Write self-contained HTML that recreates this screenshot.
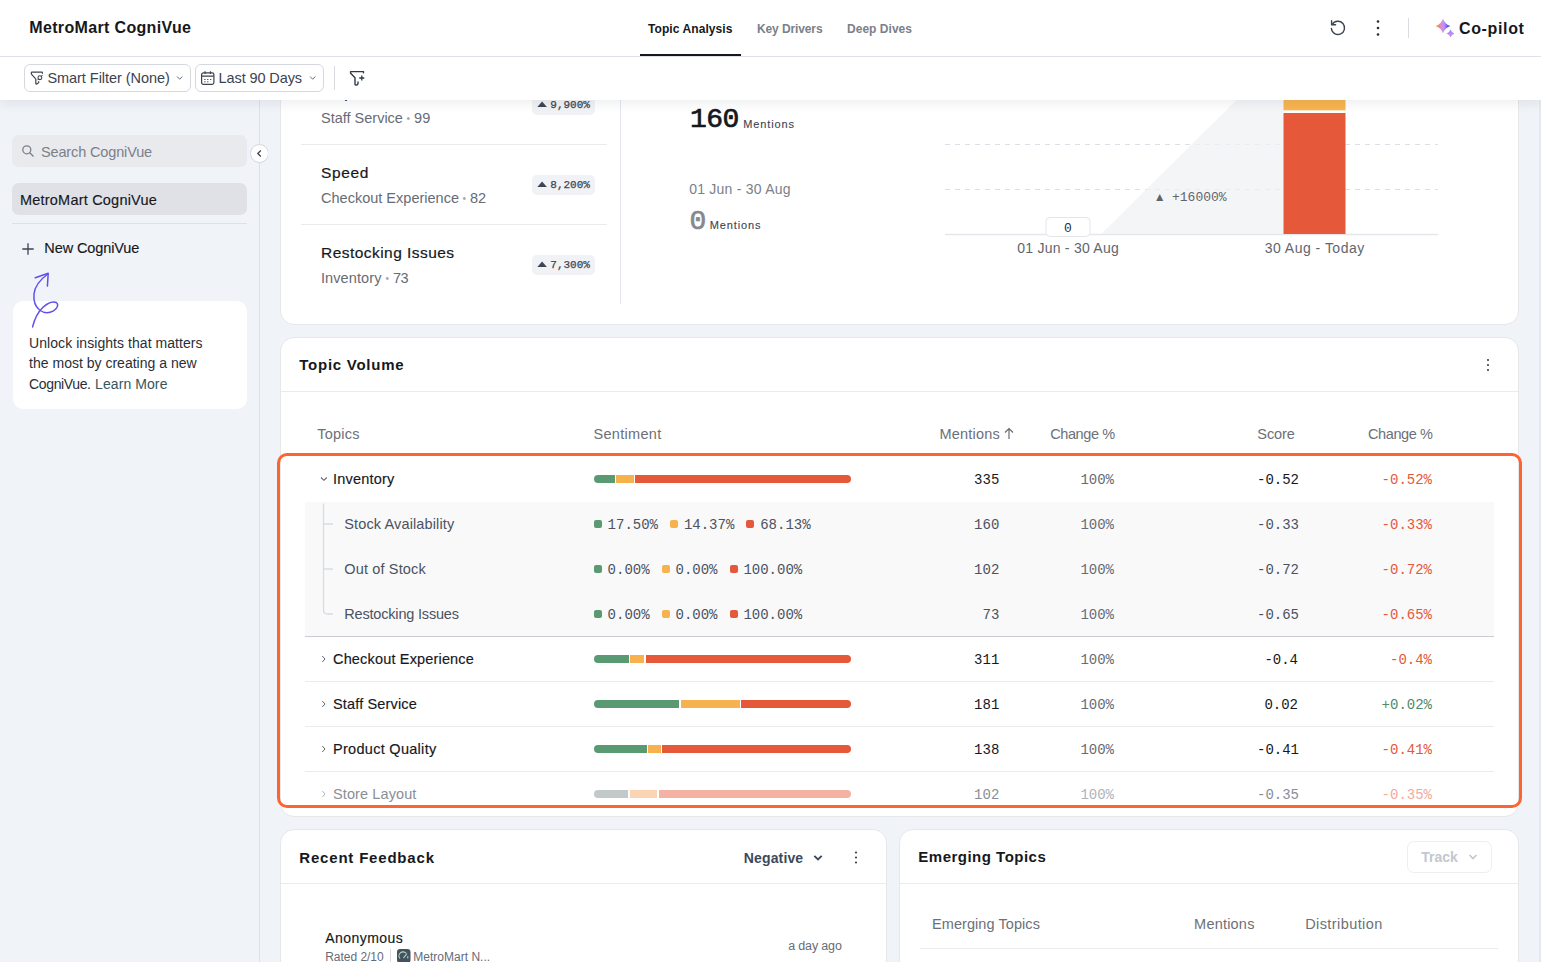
<!DOCTYPE html>
<html lang="en">
<head>
<meta charset="utf-8">
<title>MetroMart CogniVue</title>
<style>
*{box-sizing:border-box;margin:0;padding:0}
html,body{width:1541px;height:962px;overflow:hidden}
body{font-family:"Liberation Sans",sans-serif;background:#f0f3f8;color:#16181d;position:relative}
.layer{position:absolute;left:0;top:0;width:1541px;height:962px;overflow:hidden}
.t{position:absolute;white-space:nowrap;line-height:1;font-family:"Liberation Sans",sans-serif}
.m{font-family:"Liberation Mono",monospace}
.a{position:absolute}
svg{position:absolute;overflow:visible}
.card{position:absolute;background:#fff;border:1px solid #e5e7eb;border-radius:14px}
.hl{position:absolute;height:1px;background:#eaebee}
.badge{position:absolute;left:532px;width:62.5px;height:20px;background:#f1f2f5;border-radius:5px}
.bar{position:absolute;left:594px;width:256.5px;height:8px;border-radius:4px;overflow:hidden}
.bar i{position:absolute;top:0;height:8px}
.g{background:#5a9a72}.o{background:#f7b24d}.r{background:#e5583a}
.sq{position:absolute;width:7.5px;height:7.5px;border-radius:2px}
.fbtn{position:absolute;top:64px;height:28px;border:1px solid #d5d8df;border-radius:6px;background:#fff}
</style>
</head>
<body>
<!-- ================= MAIN ================= -->
<div id="main" class="layer">
  <!-- card 1 -->
  <div class="card" style="left:280px;top:60px;width:1239px;height:265px"></div>
  <div class="hl" style="left:301px;top:144px;width:306px"></div>
  <div class="hl" style="left:301px;top:224px;width:306px"></div>
  <div class="a" style="left:620px;top:90px;width:1px;height:214px;background:#e3e6ed"></div>
  <div class="badge" style="top:95px"></div>
  <div class="badge" style="top:175px"></div>
  <div class="badge" style="top:255px"></div>
  <svg style="left:0;top:0" width="1541" height="330" viewBox="0 0 1541 330"><g fill="#3c4654"><polygon points="537.3,107.0 546.9,107.0 542.1,101.6"/><polygon points="537.3,187.0 546.9,187.0 542.1,181.6"/><polygon points="537.3,267.0 546.9,267.0 542.1,261.6"/></g></svg>
  <!-- chart -->
  <svg style="left:0;top:0" width="1541" height="330" viewBox="0 0 1541 330">
    <polygon points="1101,234.5 1283.5,54 1283.5,234.5" fill="#f4f5f7"/>
    <line x1="945" y1="144.5" x2="1438" y2="144.5" stroke="#dcdfe8" stroke-width="1" stroke-dasharray="5 5"/>
    <line x1="945" y1="189.5" x2="1438" y2="189.5" stroke="#dcdfe8" stroke-width="1" stroke-dasharray="5 5"/>
    <line x1="945" y1="234.5" x2="1438" y2="234.5" stroke="#e4e6eb" stroke-width="1.6"/>
    <polygon points="1101,234 1283.5,53.5 1283.5,234" fill="#f4f5f7" fill-opacity=".6"/>
    <rect x="1283.5" y="113" width="62" height="121" fill="#e5583a"/>
    <rect x="1283.5" y="60" width="62" height="50.3" fill="#f8b44e"/>
    <rect x="1046" y="217.5" width="44" height="19" rx="4" fill="#fff" stroke="#e3e5ea" stroke-width="1"/>
  </svg>
  <!-- topic volume card -->
  <div class="card" style="left:280px;top:337px;width:1239px;height:480px"></div>
  <div class="hl" style="left:281px;top:391px;width:1237px"></div>
  <svg style="left:1485px;top:357px" width="6" height="16" viewBox="0 0 6 16"><circle cx="3" cy="3" r="1.1" fill="#3c4350"/><circle cx="3" cy="8" r="1.1" fill="#3c4350"/><circle cx="3" cy="13" r="1.1" fill="#3c4350"/></svg>
  <!-- sort arrow -->
  <svg style="left:1003px;top:427px" width="12" height="13" viewBox="0 0 12 13"><path d="M6 12V1.5M2 5.5L6 1.5L10 5.5" fill="none" stroke="#666c77" stroke-width="1.2"/></svg>
  <!-- sub rows bg -->
  <div class="a" style="left:305px;top:501.5px;width:1189px;height:134.5px;background:#f9f9fa"></div>
  <div class="a" style="left:305px;top:636px;width:1189px;height:1px;background:#c9ccd3"></div>
  <div class="hl" style="left:305px;top:681px;width:1189px"></div>
  <div class="hl" style="left:305px;top:726px;width:1189px"></div>
  <div class="hl" style="left:305px;top:771px;width:1189px"></div>
  <!-- tree lines -->
  <svg style="left:0;top:0" width="1541" height="962" viewBox="0 0 1541 962">
    <path d="M323.5 503.5V610Q323.5 614 327.5 614H333M323.5 524H333M323.5 569H333" fill="none" stroke="#d8dbe4" stroke-width="1.3"/>
    <path d="M321 477.5L323.9 480.3L326.800 477.5" fill="none" stroke="#5f6570" stroke-width="1.1"/>
    <g fill="none" stroke="#5f6670" stroke-width="1">
      <path d="M322.3 656L325 659L322.3 662"/>
      <path d="M322.3 701L325 704L322.3 707"/>
      <path d="M322.3 746L325 749L322.3 752"/>
      <path d="M322.3 791L325 794L322.3 797" stroke="#b0b3ba"/>
    </g>
  </svg>
  <!-- bars -->
  <div class="bar" style="top:475px"><i class="g" style="left:0;width:21px"></i><i class="o" style="left:22.3px;width:17.5px"></i><i class="r" style="left:41px;width:216px"></i></div>
  <div class="bar" style="top:655px"><i class="g" style="left:0;width:34.8px"></i><i class="o" style="left:36.4px;width:13.7px"></i><i class="r" style="left:51.8px;width:205px"></i></div>
  <div class="bar" style="top:700px"><i class="g" style="left:0;width:85px"></i><i class="o" style="left:86.7px;width:59.3px"></i><i class="r" style="left:147.3px;width:110px"></i></div>
  <div class="bar" style="top:745px"><i class="g" style="left:0;width:52.6px"></i><i class="o" style="left:54.3px;width:12.4px"></i><i class="r" style="left:68.4px;width:189px"></i></div>
  <div class="bar" style="top:790px"><i style="left:0;width:34px;background:#c3c8c9"></i><i style="left:35.6px;width:27.4px;background:#fbd4b3"></i><i style="left:64.7px;width:192px;background:#f4b2a4"></i></div>
  <!-- legend squares -->
  <div class="sq g" style="left:594px;top:520.3px"></div><div class="sq o" style="left:670.3px;top:520.3px"></div><div class="sq r" style="left:746px;top:520.3px"></div>
  <div class="sq g" style="left:594px;top:565.3px"></div><div class="sq o" style="left:662px;top:565.3px"></div><div class="sq r" style="left:730px;top:565.3px"></div>
  <div class="sq g" style="left:594px;top:610.3px"></div><div class="sq o" style="left:662px;top:610.3px"></div><div class="sq r" style="left:730px;top:610.3px"></div>
  <!-- highlight box -->
  <div class="a" style="left:277px;top:453px;width:1245px;height:355px;border:3px solid #fd6432;border-radius:10px"></div>
  <!-- bottom cards -->
  <div class="card" style="left:280px;top:829px;width:607px;height:200px"></div>
  <div class="hl" style="left:281px;top:883px;width:605px"></div>
  <div class="card" style="left:899px;top:829px;width:620px;height:200px"></div>
  <div class="hl" style="left:900px;top:883px;width:618px"></div>
  <div class="hl" style="left:920px;top:948px;width:578px"></div>
  <svg style="left:812px;top:853px" width="12" height="10" viewBox="0 0 12 10"><path d="M2.300 2.800L6 6.500L9.700 2.800" fill="none" stroke="#3b4a5c" stroke-width="1.900"/></svg>
  <svg style="left:853px;top:850px" width="6" height="16" viewBox="0 0 6 16"><circle cx="3" cy="2.5" r="1.1" fill="#3c4350"/><circle cx="3" cy="7.5" r="1.1" fill="#3c4350"/><circle cx="3" cy="12.5" r="1.1" fill="#3c4350"/></svg>
  <div class="a" style="left:1407px;top:841px;width:85px;height:31.5px;border:1px solid #eceef2;border-radius:7px"></div>
  <svg style="left:1467px;top:852px" width="12" height="10" viewBox="0 0 12 10"><path d="M2.5 3L6 6.5L9.5 3" fill="none" stroke="#c3c7cf" stroke-width="1.6"/></svg>
  <div class="a" style="left:390px;top:949px;width:1px;height:13px;background:#d9dbe0"></div>
  <svg style="left:397px;top:949px" width="14" height="14" viewBox="0 0 14 14"><rect x="0" y="0" width="13.5" height="14" rx="3.2" fill="#44515e"/><path d="M3 9.500A4 4 0 0 1 9 4.200" fill="none" stroke="#b5dcc0" stroke-width="1.100"/><path d="M6.500 9L10 4.500" stroke="#b5dcc0" stroke-width="1.200"/><path d="M10.800 7V9.500" stroke="#b5dcc0" stroke-width="1"/></svg>
<div class="a" style="left:1539px;top:100px;width:2px;height:862px;background:#e6e8ed"></div>
<span id="t14" class="t" style="top:85px;font-size:15.5px;color:#16181d;left:321.00px;-webkit-text-stroke:.2px #16181d;">Helpfulness</span>
<span id="t15" class="t" style="top:111px;font-size:14.5px;color:#666c77;left:321.00px;">Staff Service</span>
<span id="t16" class="t" style="top:111px;font-size:14.5px;color:#666c77;left:414.00px;letter-spacing:0.180px;">99</span>
<span id="t17" class="t" style="top:165px;font-size:15.5px;color:#16181d;left:321.00px;letter-spacing:0.634px;-webkit-text-stroke:.2px #16181d;">Speed</span>
<span id="t18" class="t" style="top:191px;font-size:14.5px;color:#666c77;left:321.00px;letter-spacing:0.009px;">Checkout Experience</span>
<span id="t19" class="t" style="top:191px;font-size:14.5px;color:#666c77;left:470.00px;letter-spacing:-0.070px;">82</span>
<span id="t20" class="t" style="top:245px;font-size:15.5px;color:#16181d;left:321.00px;letter-spacing:0.454px;-webkit-text-stroke:.2px #16181d;">Restocking Issues</span>
<span id="t21" class="t" style="top:271px;font-size:14.5px;color:#666c77;left:321.00px;letter-spacing:0.094px;">Inventory</span>
<span id="t22" class="t" style="top:271px;font-size:14.5px;color:#666c77;left:393.00px;letter-spacing:-0.570px;">73</span>
<span id="t23" class="t" style="top:114px;font-size:10px;color:#a3a8b0;left:406.40px;">•</span>
<span id="t24" class="t" style="top:194px;font-size:10px;color:#a3a8b0;left:462.50px;">•</span>
<span id="t25" class="t" style="top:274px;font-size:10px;color:#a3a8b0;left:385.40px;">•</span>
<span id="t26" class="t m" style="top:100px;font-size:11px;color:#3c4654;left:550.30px;-webkit-text-stroke:.25px #3c4654;">9,900%</span>
<span id="t27" class="t m" style="top:180px;font-size:11px;color:#3c4654;left:550.30px;-webkit-text-stroke:.25px #3c4654;">8,200%</span>
<span id="t28" class="t m" style="top:260px;font-size:11px;color:#3c4654;left:550.30px;-webkit-text-stroke:.25px #3c4654;">7,300%</span>
<span id="t29" class="t m" style="top:106px;font-size:28px;color:#16181d;left:690.00px;letter-spacing:-0.607px;-webkit-text-stroke:.7px #16181d;">160</span>
<span id="t30" class="t" style="top:119px;font-size:11px;color:#3c4350;left:743.30px;letter-spacing:0.857px;-webkit-text-stroke:.1px #3c4350;">Mentions</span>
<span id="t31" class="t" style="top:182px;font-size:14px;color:#7b8089;left:689.20px;letter-spacing:0.235px;">01 Jun - 30 Aug</span>
<span id="t32" class="t m" style="top:208px;font-size:28px;color:#85888f;left:689.50px;letter-spacing:-0.613px;-webkit-text-stroke:.7px #85888f;">0</span>
<span id="t33" class="t" style="top:220px;font-size:11px;color:#3c4350;left:709.80px;letter-spacing:0.857px;-webkit-text-stroke:.1px #3c4350;">Mentions</span>
<span id="t34" class="t m" style="top:191px;font-size:13px;color:#60656c;left:1172.00px;">+16000%</span>
<span id="t35" class="t" style="top:191px;font-size:12px;color:#60656c;left:1153.80px;">▲</span>
<span id="t36" class="t m" style="top:222px;font-size:13px;color:#2a2e36;left:1064.00px;letter-spacing:-0.013px;">0</span>
<span id="t37" class="t" style="top:241px;font-size:14px;color:#5f6670;left:1017.20px;letter-spacing:0.248px;">01 Jun - 30 Aug</span>
<span id="t38" class="t" style="top:241px;font-size:14px;color:#5f6670;left:1264.70px;letter-spacing:0.489px;">30 Aug - Today</span>
<span id="t39" class="t" style="top:357px;font-size:15px;color:#16181d;font-weight:700;left:299.30px;letter-spacing:0.740px;">Topic Volume</span>
<span id="t40" class="t" style="top:427px;font-size:14.5px;color:#6c7078;left:317.30px;letter-spacing:0.232px;">Topics</span>
<span id="t41" class="t" style="top:427px;font-size:14.5px;color:#6c7078;left:593.50px;letter-spacing:0.300px;">Sentiment</span>
<span id="t42" class="t" style="top:427px;font-size:14.5px;color:#6c7078;left:939.50px;letter-spacing:0.207px;">Mentions</span>
<span id="t43" class="t" style="top:427px;font-size:14.5px;color:#6c7078;left:1050.20px;letter-spacing:-0.402px;">Change %</span>
<span id="t44" class="t" style="top:427px;font-size:14.5px;color:#6c7078;left:1257.30px;letter-spacing:-0.078px;">Score</span>
<span id="t45" class="t" style="top:427px;font-size:14.5px;color:#6c7078;left:1368.00px;letter-spacing:-0.402px;">Change %</span>
<span id="t46" class="t" style="top:472px;font-size:14.5px;color:#16181d;left:333.00px;letter-spacing:0.205px;-webkit-text-stroke:.15px #16181d;">Inventory</span>
<span id="t47" class="t m" style="top:473px;font-size:14px;color:#16181d;right:541.70px;">335</span>
<span id="t48" class="t m" style="top:473px;font-size:14px;color:#666c77;right:427.00px;">100%</span>
<span id="t49" class="t m" style="top:473px;font-size:14px;color:#16181d;right:242.00px;">-0.52</span>
<span id="t50" class="t m" style="top:473px;font-size:14px;color:#e5583a;right:109.00px;">-0.52%</span>
<span id="t51" class="t" style="top:517px;font-size:14.5px;color:#4b5260;left:344.30px;letter-spacing:0.126px;">Stock Availability</span>
<span id="t52" class="t m" style="top:518px;font-size:14px;color:#4b5260;right:541.70px;">160</span>
<span id="t53" class="t m" style="top:518px;font-size:14px;color:#666c77;right:427.00px;">100%</span>
<span id="t54" class="t m" style="top:518px;font-size:14px;color:#4b5260;right:242.00px;">-0.33</span>
<span id="t55" class="t m" style="top:518px;font-size:14px;color:#e5583a;right:109.00px;">-0.33%</span>
<span id="t56" class="t m" style="top:518px;font-size:14px;color:#4b5260;left:607.60px;">17.50%</span>
<span id="t57" class="t m" style="top:518px;font-size:14px;color:#4b5260;left:683.90px;">14.37%</span>
<span id="t58" class="t m" style="top:518px;font-size:14px;color:#4b5260;left:760.20px;">68.13%</span>
<span id="t59" class="t" style="top:562px;font-size:14.5px;color:#4b5260;left:344.30px;letter-spacing:0.142px;">Out of Stock</span>
<span id="t60" class="t m" style="top:563px;font-size:14px;color:#4b5260;right:541.70px;">102</span>
<span id="t61" class="t m" style="top:563px;font-size:14px;color:#666c77;right:427.00px;">100%</span>
<span id="t62" class="t m" style="top:563px;font-size:14px;color:#4b5260;right:242.00px;">-0.72</span>
<span id="t63" class="t m" style="top:563px;font-size:14px;color:#e5583a;right:109.00px;">-0.72%</span>
<span id="t64" class="t m" style="top:563px;font-size:14px;color:#4b5260;left:607.60px;">0.00%</span>
<span id="t65" class="t m" style="top:563px;font-size:14px;color:#4b5260;left:675.50px;">0.00%</span>
<span id="t66" class="t m" style="top:563px;font-size:14px;color:#4b5260;left:743.40px;">100.00%</span>
<span id="t67" class="t" style="top:607px;font-size:14.5px;color:#4b5260;left:344.30px;letter-spacing:-0.187px;">Restocking Issues</span>
<span id="t68" class="t m" style="top:608px;font-size:14px;color:#4b5260;right:541.70px;">73</span>
<span id="t69" class="t m" style="top:608px;font-size:14px;color:#666c77;right:427.00px;">100%</span>
<span id="t70" class="t m" style="top:608px;font-size:14px;color:#4b5260;right:242.00px;">-0.65</span>
<span id="t71" class="t m" style="top:608px;font-size:14px;color:#e5583a;right:109.00px;">-0.65%</span>
<span id="t72" class="t m" style="top:608px;font-size:14px;color:#4b5260;left:607.60px;">0.00%</span>
<span id="t73" class="t m" style="top:608px;font-size:14px;color:#4b5260;left:675.50px;">0.00%</span>
<span id="t74" class="t m" style="top:608px;font-size:14px;color:#4b5260;left:743.40px;">100.00%</span>
<span id="t75" class="t" style="top:652px;font-size:14.5px;color:#16181d;left:333.00px;letter-spacing:0.167px;-webkit-text-stroke:.15px #16181d;">Checkout Experience</span>
<span id="t76" class="t m" style="top:653px;font-size:14px;color:#16181d;right:541.70px;">311</span>
<span id="t77" class="t m" style="top:653px;font-size:14px;color:#666c77;right:427.00px;">100%</span>
<span id="t78" class="t m" style="top:653px;font-size:14px;color:#16181d;right:243.00px;">-0.4</span>
<span id="t79" class="t m" style="top:653px;font-size:14px;color:#e5583a;right:109.00px;">-0.4%</span>
<span id="t80" class="t" style="top:697px;font-size:14.5px;color:#16181d;left:333.00px;letter-spacing:0.157px;-webkit-text-stroke:.15px #16181d;">Staff Service</span>
<span id="t81" class="t m" style="top:698px;font-size:14px;color:#16181d;right:541.70px;">181</span>
<span id="t82" class="t m" style="top:698px;font-size:14px;color:#666c77;right:427.00px;">100%</span>
<span id="t83" class="t m" style="top:698px;font-size:14px;color:#16181d;right:243.00px;">0.02</span>
<span id="t84" class="t m" style="top:698px;font-size:14px;color:#4f8a68;right:109.00px;">+0.02%</span>
<span id="t85" class="t" style="top:742px;font-size:14.5px;color:#16181d;left:333.00px;letter-spacing:0.291px;-webkit-text-stroke:.15px #16181d;">Product Quality</span>
<span id="t86" class="t m" style="top:743px;font-size:14px;color:#16181d;right:541.70px;">138</span>
<span id="t87" class="t m" style="top:743px;font-size:14px;color:#666c77;right:427.00px;">100%</span>
<span id="t88" class="t m" style="top:743px;font-size:14px;color:#16181d;right:242.00px;">-0.41</span>
<span id="t89" class="t m" style="top:743px;font-size:14px;color:#e5583a;right:109.00px;">-0.41%</span>
<span id="t90" class="t" style="top:787px;font-size:14.5px;color:#8a8e96;left:333.00px;letter-spacing:0.105px;">Store Layout</span>
<span id="t91" class="t m" style="top:788px;font-size:14px;color:#8a8e96;right:541.70px;">102</span>
<span id="t92" class="t m" style="top:788px;font-size:14px;color:#b0b3ba;right:427.00px;">100%</span>
<span id="t93" class="t m" style="top:788px;font-size:14px;color:#8a8e96;right:242.00px;">-0.35</span>
<span id="t94" class="t m" style="top:788px;font-size:14px;color:#f2ab9a;right:109.00px;">-0.35%</span>
<span id="t95" class="t" style="top:850px;font-size:15px;color:#16181d;font-weight:700;left:299.30px;letter-spacing:0.807px;">Recent Feedback</span>
<span id="t96" class="t" style="top:851px;font-size:14px;color:#3b4a5c;font-weight:700;left:743.80px;letter-spacing:0.143px;">Negative</span>
<span id="t97" class="t" style="top:931px;font-size:14px;color:#16181d;left:325.20px;letter-spacing:0.451px;-webkit-text-stroke:.15px #16181d;">Anonymous</span>
<span id="t98" class="t" style="top:951px;font-size:12px;color:#666c77;left:325.20px;letter-spacing:-0.022px;">Rated 2/10</span>
<span id="t99" class="t" style="top:951px;font-size:12px;color:#666c77;left:413.20px;letter-spacing:0.022px;">MetroMart N...</span>
<span id="t100" class="t" style="top:940px;font-size:12.5px;color:#666c77;left:788.20px;letter-spacing:-0.158px;">a day ago</span>
<span id="t101" class="t" style="top:849px;font-size:15px;color:#16181d;font-weight:700;left:918.30px;letter-spacing:0.495px;">Emerging Topics</span>
<span id="t102" class="t" style="top:850px;font-size:14px;color:#c3c7cf;font-weight:700;left:1421.20px;letter-spacing:-0.019px;">Track</span>
<span id="t103" class="t" style="top:917px;font-size:14.5px;color:#6c7078;left:932.00px;letter-spacing:0.071px;">Emerging Topics</span>
<span id="t104" class="t" style="top:917px;font-size:14.5px;color:#6c7078;left:1194.10px;letter-spacing:0.207px;">Mentions</span>
<span id="t105" class="t" style="top:917px;font-size:14.5px;color:#6c7078;left:1305.20px;letter-spacing:0.414px;">Distribution</span>
</div>
<!-- ================= SIDEBAR ================= -->
<div id="side" class="layer" style="width:268px">
  <div class="a" style="left:0;top:57px;width:260px;height:905px;background:#f0f3f8;border-right:1px solid #dde0e7"></div>
  <div class="a" style="left:12px;top:135px;width:235px;height:32px;background:#e8eaee;border-radius:7px"></div>
  <svg style="left:21px;top:144px" width="14" height="14" viewBox="0 0 14 14"><circle cx="5.8" cy="5.8" r="4" fill="none" stroke="#7b8089" stroke-width="1.3"/><path d="M8.8 8.8L12.5 12.5" stroke="#7b8089" stroke-width="1.3"/></svg>
  <div class="a" style="left:12px;top:183px;width:235px;height:31.5px;background:#dfe1e6;border-radius:7px"></div>
  <div class="hl" style="left:12px;top:223px;width:235px;background:#dde0e7"></div>
  <svg style="left:22px;top:242.5px" width="12" height="12" viewBox="0 0 12 12"><path d="M6 .3V11.7M.3 6H11.7" stroke="#3c4350" stroke-width="1.3"/></svg>
  <div class="a" style="left:12.5px;top:300.5px;width:234px;height:108.5px;background:#fff;border-radius:10px"></div>
  <svg style="left:0;top:0" width="268" height="962" viewBox="0 0 268 962"><path d="M32.6 326.9C34.5 319 38 312 43 307.300C47.500 303.200 53 301 56.200 302.500C58.800 304.300 57.800 308.300 53.500 310.900C49 313.300 43.500 313 39.500 310C35.300 306.500 33.400 300.500 34 294C34.800 286.500 39.500 280 47.800 274" fill="none" stroke="#5f50ee" stroke-width="1.5" stroke-linecap="round"/><path d="M35.300 277.800L48.200 273.200L47.400 286.100" fill="none" stroke="#5f50ee" stroke-width="1.5" stroke-linecap="round" stroke-linejoin="round"/></svg>
  <div class="a" style="left:249.5px;top:143.5px;width:19px;height:19px;border-radius:50%;background:#fff;border:1px solid #d3d6dd"></div>
  <svg style="left:249.5px;top:143.5px" width="19" height="19" viewBox="0 0 19 19"><path d="M10.800 6.500L7.800 9.500L10.800 12.500" fill="none" stroke="#3c4350" stroke-width="1.3"/></svg>
<span id="t7" class="t" style="top:145px;font-size:14.5px;color:#7b8089;left:41.00px;letter-spacing:-0.142px;">Search CogniVue</span>
<span id="t8" class="t" style="top:193px;font-size:14.5px;color:#16181d;left:20.00px;letter-spacing:0.208px;-webkit-text-stroke:.15px #16181d;">MetroMart CogniVue</span>
<span id="t9" class="t" style="top:241px;font-size:14.5px;color:#16181d;left:44.30px;letter-spacing:-0.099px;-webkit-text-stroke:.15px #16181d;">New CogniVue</span>
<span id="t10" class="t" style="top:336px;font-size:14px;color:#2a2e36;left:29.10px;letter-spacing:0.055px;">Unlock insights that matters</span>
<span id="t11" class="t" style="top:356px;font-size:14px;color:#2a2e36;left:29.10px;letter-spacing:0.007px;">the most by creating a new</span>
<span id="t12" class="t" style="top:377px;font-size:14px;color:#2a2e36;left:29.10px;letter-spacing:-0.373px;">CogniVue.</span>
<span id="t13" class="t" style="top:377px;font-size:14px;color:#35565c;left:95.00px;letter-spacing:0.091px;">Learn More</span>
</div>
<!-- ================= FILTER BAR ================= -->
<div id="fbar" class="layer" style="height:130px">
  <div class="a" style="left:0;top:57px;width:1541px;height:43px;background:#fff;box-shadow:0 4px 10px rgba(30,35,50,.075)"></div>
  <div class="fbtn" style="left:24px;width:167px"></div>
  <div class="fbtn" style="left:195px;width:129px"></div>
  <svg style="left:30px;top:70px" width="14" height="16" viewBox="0 0 14 16"><path d="M12.400 3.300V2.700Q12.400 2.100 11.800 2.100H2Q1.300 2.100 1.300 2.800V3.600Q1.300 4 1.600 4.300L5.500 8.600Q5.800 8.900 5.800 9.300V13.300Q5.800 14.400 6.800 13.900L8.200 13.100Q8.700 12.800 8.700 12.300V11.600" fill="none" stroke="#3c4350" stroke-width="1.200" stroke-linejoin="round" stroke-linecap="round"/><circle cx="9.900" cy="7.700" r="1.900" fill="none" stroke="#3c4350" stroke-width="1.100"/><path d="M11.300 6.300L12.300 5.300M8.500 9.100L7.700 9.900" stroke="#3c4350" stroke-width="1" stroke-linecap="round"/></svg>
  <svg style="left:175.500px;top:74px" width="8" height="8" viewBox="0 0 8 8"><path d="M1 2.500L3.700 5.200L6.400 2.500" fill="none" stroke="#666c77" stroke-width="1"/></svg>
  <svg style="left:201px;top:70.500px" width="14" height="14" viewBox="0 0 14 14"><rect x=".6" y="1.800" width="12.300" height="11.500" rx="1.800" fill="none" stroke="#3c4350" stroke-width="1.200"/><path d="M.6 5.200H12.900M4 .3V3M9.500 .3V3" stroke="#3c4350" stroke-width="1.200"/><path d="M3.300 8.500H4.500M6.200 8.500H7.400M9.100 8.500H10.300M3.300 10.800H4.500M6.200 10.800H7.400" stroke="#3c4350" stroke-width="1"/></svg>
  <svg style="left:308.500px;top:74px" width="8" height="8" viewBox="0 0 8 8"><path d="M1 2.500L3.700 5.200L6.400 2.500" fill="none" stroke="#666c77" stroke-width="1"/></svg>
  <div class="a" style="left:334px;top:65.500px;width:1px;height:24px;background:#d9dbe0"></div>
  <svg style="left:349px;top:70px" width="17" height="17" viewBox="0 0 17 17"><path d="M14.500 2.800V1.600H1.600V3.300L6 7.800V14.200C6 15.600 9 15.300 9 13.500V12" fill="none" stroke="#2f3a4a" stroke-width="1.400" stroke-linejoin="round" stroke-linecap="round"/><path d="M12.800 5.500V10.500M10.300 8H15.300" stroke="#2f3a4a" stroke-width="1.300"/></svg>
<span id="t5" class="t" style="top:71px;font-size:14.5px;color:#3c4350;left:47.40px;letter-spacing:-0.041px;">Smart Filter (None)</span>
<span id="t6" class="t" style="top:71px;font-size:14.5px;color:#3c4350;left:218.60px;letter-spacing:-0.103px;">Last 90 Days</span>
</div>
<!-- ================= HEADER ================= -->
<div id="hdr" class="layer" style="height:57px">
  <div class="a" style="left:0;top:0;width:1541px;height:57px;background:#fff;border-bottom:1px solid #dfe2ea"></div>
  <div class="a" style="left:640px;top:53.500px;width:101px;height:2.500px;background:#16181d"></div>
  <svg style="left:1329px;top:19px" width="18" height="18" viewBox="0 0 18 18"><path d="M3.300 5.500A6.600 6.600 0 1 1 2.400 9.500" fill="none" stroke="#3c4350" stroke-width="1.400" stroke-linecap="round"/><path d="M2.600 1.800V5.800H6.600" fill="none" stroke="#3c4350" stroke-width="1.400" stroke-linecap="round" stroke-linejoin="round"/></svg>
  <svg style="left:1375px;top:19px" width="6" height="18" viewBox="0 0 6 18"><circle cx="3" cy="2.500" r="1.300" fill="#2a2e36"/><circle cx="3" cy="9" r="1.300" fill="#2a2e36"/><circle cx="3" cy="15.500" r="1.300" fill="#2a2e36"/></svg>
  <div class="a" style="left:1408px;top:18px;width:1px;height:20px;background:#d9dbe0"></div>
  <svg style="left:1435px;top:18px" width="21" height="21" viewBox="0 0 21 21"><defs><linearGradient id="cg" x1="0" y1="0" x2="1" y2="0"><stop offset="0" stop-color="#ef7d55"/><stop offset=".27" stop-color="#ee8a78"/><stop offset=".36" stop-color="#d88ee0"/><stop offset=".55" stop-color="#c490ee"/><stop offset=".64" stop-color="#9d8ef8"/><stop offset=".8" stop-color="#6a55f6"/><stop offset="1" stop-color="#3f33f2"/></linearGradient><linearGradient id="cg2" x1="0" y1="0" x2="0" y2="1"><stop offset="0" stop-color="#948cf8"/><stop offset=".5" stop-color="#b78cf0"/><stop offset="1" stop-color="#dc8ae0"/></linearGradient></defs><path d="M8 0.7Q9.9 6.1 15.3 8Q9.9 9.9 8 15.3Q6.1 9.9 0.7 8Q6.1 6.1 8 0.7Z" fill="url(#cg)"/><path d="M15.5 11.6Q16.5 14.6 19.5 15.6Q16.5 16.6 15.5 19.6Q14.5 16.6 11.5 15.6Q14.5 14.6 15.5 11.6Z" fill="url(#cg2)"/></svg>
<span id="t0" class="t" style="top:20px;font-size:16px;color:#16181d;font-weight:700;left:29.30px;letter-spacing:0.341px;">MetroMart CogniVue</span>
<span id="t1" class="t" style="top:23px;font-size:12px;color:#16181d;font-weight:700;left:648.00px;letter-spacing:0.081px;">Topic Analysis</span>
<span id="t2" class="t" style="top:23px;font-size:12px;color:#7b8089;font-weight:700;left:757.00px;letter-spacing:-0.111px;">Key Drivers</span>
<span id="t3" class="t" style="top:23px;font-size:12px;color:#7b8089;font-weight:700;left:847.00px;letter-spacing:0.030px;">Deep Dives</span>
<span id="t4" class="t" style="top:21px;font-size:16px;color:#16181d;font-weight:700;left:1459.00px;letter-spacing:0.635px;">Co-pilot</span>
</div>
</body>
</html>
